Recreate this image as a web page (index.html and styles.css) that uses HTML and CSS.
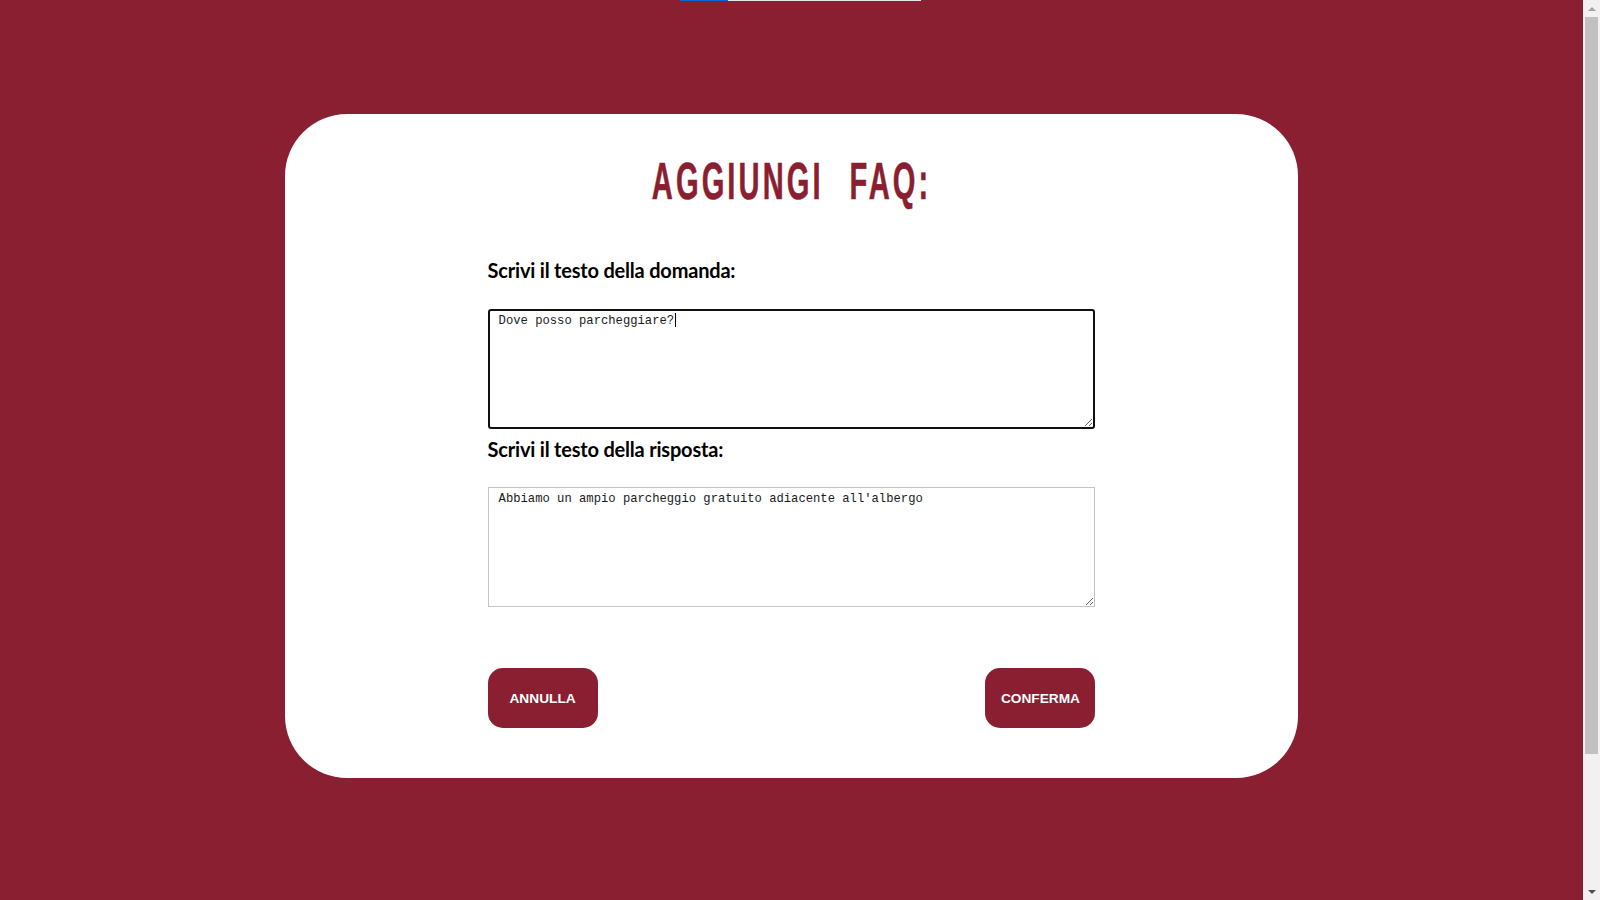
FILE: index.html
```html
<!DOCTYPE html>
<html lang="it">
<head>
<meta charset="utf-8">
<title>Aggiungi FAQ</title>
<link rel="stylesheet" href="styles.css">
</head>
<body>
<div class="viewport">
  <div class="page">
    <div class="topbar"><span class="topbar-fill"></span></div>
    <main class="card">
      <h1 class="title"><span class="title-text">AGGIUNGI FAQ:</span></h1>
      <form class="faq-form">
        <label class="label" for="domanda">Scrivi il testo della domanda:</label>
        <div class="field-wrap">
          <textarea id="domanda" class="field field-focus">Dove posso parcheggiare?</textarea>
          <span class="caret"></span>
        </div>
        <label class="label label-second" for="risposta">Scrivi il testo della risposta:</label>
        <div class="field-wrap field-wrap-second">
          <textarea id="risposta" class="field">Abbiamo un ampio parcheggio gratuito adiacente all'albergo</textarea>
        </div>
        <div class="actions">
          <button type="button" class="btn">ANNULLA</button>
          <button type="button" class="btn">CONFERMA</button>
        </div>
      </form>
    </main>
  </div>
  <div class="scrollbar">
    <div class="arrow-btn"><span class="arrow arrow-up"></span></div>
    <div class="track"><span class="thumb"></span></div>
    <div class="arrow-btn"><span class="arrow arrow-down"></span></div>
  </div>
</div>
</body>
</html>
```

FILE: styles.css
```css
html, body {
  margin: 0;
  padding: 0;
  height: 100%;
  overflow: hidden;
}

body {
  background: #891f31;
  font-family: "Lato", "Liberation Sans", sans-serif;
}

.viewport {
  display: flex;
  height: 100vh;
}

.page {
  flex: 1;
  position: relative;
  min-width: 0;
}

.topbar {
  position: absolute;
  top: 0;
  left: 680px;
  width: 241px;
  height: 1px;
  background: #e6e6e6;
  display: flex;
}

.topbar-fill {
  width: 48px;
  height: 1px;
  background: #0a66d2;
}

.card {
  width: 64%;
  margin: 114px auto 0;
  background: #ffffff;
  border-radius: 62px;
  padding: 37px 0 50px;
  box-sizing: border-box;
}

.title {
  margin: 0;
  text-align: center;
  font-family: "Liberation Sans", Arial, sans-serif;
  font-weight: 700;
  font-size: 52px;
  line-height: 60px;
  color: #891f31;
}

.title-text {
  display: inline-block;
  letter-spacing: 5.5px;
  word-spacing: 26px;
  transform: scaleX(0.56);
  transform-origin: center;
  white-space: nowrap;
  -webkit-text-stroke: 0.6px #891f31;
}

.faq-form {
  width: 60%;
  margin: 47px auto 0;
  display: flex;
  flex-direction: column;
}

.label {
  display: block;
  font-family: "Lato", sans-serif;
  font-weight: 700;
  font-size: 20px;
  line-height: 24px;
  color: #000;
  letter-spacing: -0.2px;
}

.label-second {
  margin-top: 8px;
}

.field-wrap {
  position: relative;
  margin-top: 27px;
}

.field-wrap-second {
  margin-top: 26px;
}

.field {
  display: block;
  box-sizing: border-box;
  width: 100%;
  height: 120px;
  margin: 0;
  padding: 4px 9px 4px 10px;
  border: 1px solid #c4c4c4;
  border-radius: 0;
  background: #fff;
  font-family: "Liberation Mono", "DejaVu Sans Mono", monospace;
  font-size: 12.2px;
  line-height: 15px;
  color: #1a1a1a;
  resize: vertical;
  outline: none;
}

.field-focus {
  border: 2px solid #111;
  border-radius: 3px;
  padding: 3px 8px 3px 9px;
}

.caret {
  position: absolute;
  left: 187px;
  top: 4px;
  width: 1px;
  height: 14px;
  background: #000;
}

.actions {
  margin-top: 61px;
  display: flex;
  justify-content: space-between;
}

.btn {
  width: 110px;
  height: 60px;
  border: none;
  border-radius: 15px;
  background: #891f31;
  color: #fff;
  font-family: "Liberation Sans", Arial, sans-serif;
  font-weight: 700;
  font-size: 13.7px;
  padding: 0;
  cursor: pointer;
}

.scrollbar {
  width: 17px;
  flex: none;
  background: #f1f1f1;
  display: flex;
  flex-direction: column;
}

.arrow-btn {
  flex: none;
  height: 17px;
  display: flex;
  align-items: center;
  justify-content: center;
}

.arrow {
  width: 0;
  height: 0;
  border-left: 4px solid transparent;
  border-right: 4px solid transparent;
}

.arrow-up {
  border-bottom: 4px solid #a3a3a3;
}

.arrow-down {
  border-top: 4px solid #505050;
}

.track {
  flex: 1;
  min-height: 0;
}

.thumb {
  display: block;
  width: 13px;
  margin-left: 2px;
  height: 737px;
  background: #c1c1c1;
}
```
